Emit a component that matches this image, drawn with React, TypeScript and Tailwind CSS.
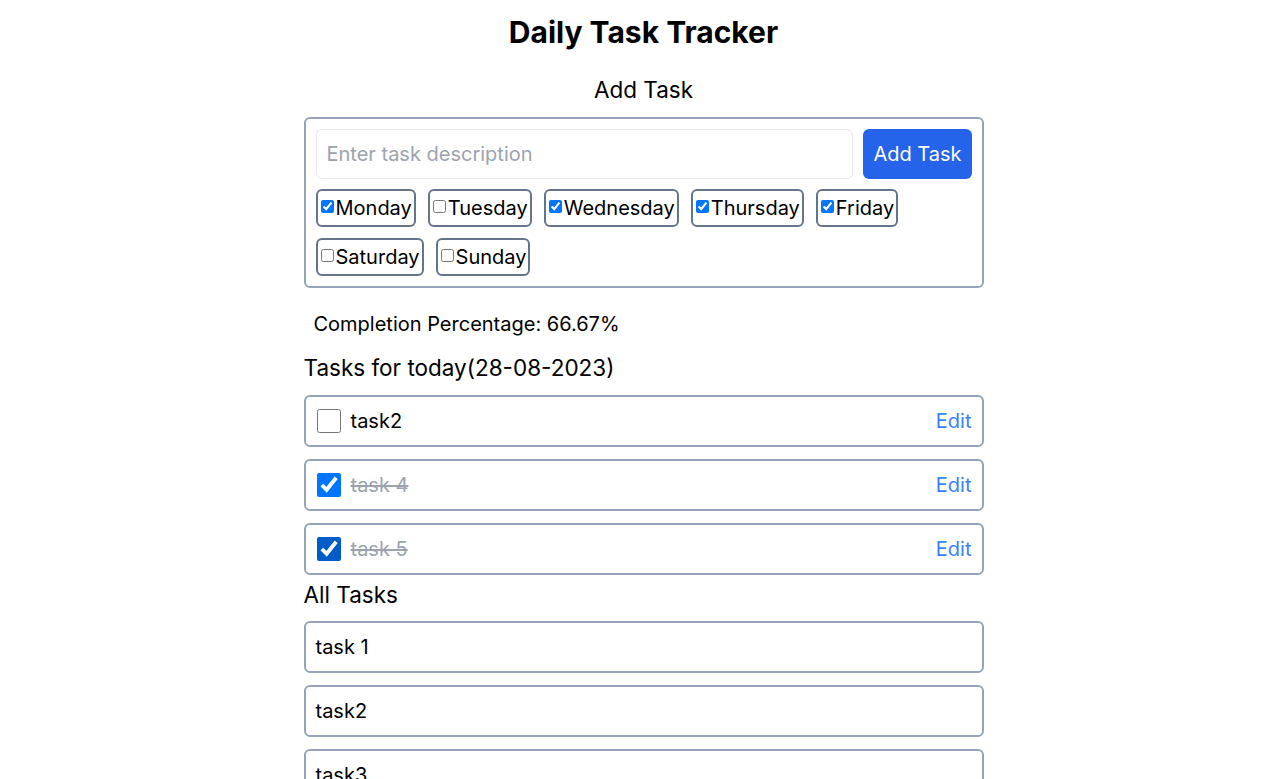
import { useState } from 'react';

const days = ['Monday', 'Tuesday', 'Wednesday', 'Thursday', 'Friday', 'Saturday', 'Sunday'];

const todayTasks = [
    { id: 2, text: 'task2', done: false },
    { id: 4, text: 'task 4', done: true },
    { id: 5, text: 'task 5', done: true },
];

const allTasks = ['task 1', 'task2', 'task3', 'task 4', 'task 5'];

const App = () => {
    const [selected, setSelected] = useState<string[]>(['Monday', 'Wednesday', 'Thursday', 'Friday']);
    const [tasks, setTasks] = useState(todayTasks);
    const [desc, setDesc] = useState('');

    const toggleDay = (day: string) =>
        setSelected((s) => (s.includes(day) ? s.filter((d) => d !== day) : [...s, day]));

    const toggleTask = (id: number) =>
        setTasks((t) => t.map((x) => (x.id === id ? { ...x, done: !x.done } : x)));

    const pct = ((tasks.filter((t) => t.done).length / tasks.length) * 100).toFixed(2);

    return (
        <div className="min-h-screen bg-white text-black font-['Inter',sans-serif] pt-[14px]">
            <div className="max-w-[680px] mx-auto">
                <h1 className="text-3xl font-bold text-center">Daily Task Tracker</h1>

                <h2 className="text-[22.5px] leading-7 text-center mt-[26px] mb-[13px]">Add Task</h2>
                <div className="border-2 border-[#94a3b8] rounded-md p-2.5">
                    <div className="flex gap-2.5">
                        <input
                            value={desc}
                            onChange={(e) => setDesc(e.target.value)}
                            placeholder="Enter task description"
                            className="flex-1 h-[50px] border border-[#e5e7eb] rounded-md px-2.5 text-xl placeholder:text-[#9ca3af] outline-none"
                        />
                        <button className="h-[50px] px-2.5 bg-[#2563eb] text-white text-xl rounded-md">Add Task</button>
                    </div>
                    <div className="flex flex-wrap gap-x-3 gap-y-[11px] mt-2.5">
                        {days.map((day) => (
                            <label
                                key={day}
                                className="flex items-center h-[38px] pr-[2px] border-2 border-[#64748b] rounded-md text-xl cursor-pointer"
                            >
                                <input
                                    type="checkbox"
                                    checked={selected.includes(day)}
                                    onChange={() => toggleDay(day)}
                                    className="my-0 ml-[3px] mr-[2px] -mt-[3px]"
                                />
                                {day}
                            </label>
                        ))}
                    </div>
                </div>

                <p className="text-xl leading-7 pl-2.5 mt-[22px]">Completion Percentage: {pct}%</p>

                <h2 className="text-[22.5px] leading-7 mt-[16px] mb-[13px]">Tasks for today(28-08-2023)</h2>
                <div className="flex flex-col gap-3">
                    {tasks.map((t) => (
                        <div
                            key={t.id}
                            className="flex items-center h-[52px] border-2 border-[#94a3b8] rounded-md pl-[11px] pr-2.5"
                        >
                            <input
                                type="checkbox"
                                checked={t.done}
                                onChange={() => toggleTask(t.id)}
                                className={`w-6 h-6 m-0 ${t.id === 5 ? 'accent-[#005cc8]' : ''}`}
                            />
                            <span className={`ml-2.5 text-xl ${t.done ? 'line-through text-[#9ca3af]' : ''}`}>{t.text}</span>
                            <button className="ml-auto text-xl text-[#3b82f6]">Edit</button>
                        </div>
                    ))}
                </div>

                <h2 className="text-[22.5px] leading-7 mt-[6px] mb-[12px]">All Tasks</h2>
                <div className="flex flex-col gap-3 pb-6">
                    {allTasks.map((t) => (
                        <div key={t} className="flex items-center h-[52px] border-2 border-[#94a3b8] rounded-md px-2.5 text-xl">
                            {t}
                        </div>
                    ))}
                </div>
            </div>
        </div>
    );
};

export default App;
